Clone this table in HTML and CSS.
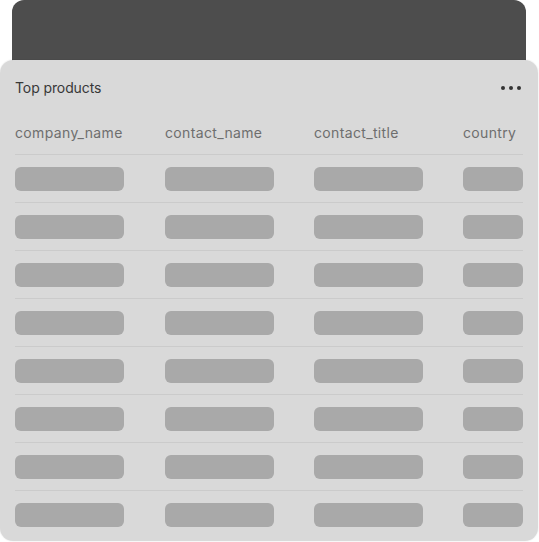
FILE: index.html
```html
<!DOCTYPE html>
<html>
<head>
<meta charset="utf-8">
<link rel="stylesheet" href="styles.css">
</head>
<body>
<div class="stack">
  <div class="back-card"></div>
  <div class="card">
    <div class="card-head">
      <span class="title">Top products</span>
      <span class="more"><i></i><i></i><i></i></span>
    </div>
    <div class="table">
      <div class="row head">
        <div class="cell">company_name</div>
        <div class="cell">contact_name</div>
        <div class="cell">contact_title</div>
        <div class="cell">country</div>
      </div>
      <div class="row"><div class="cell"><span class="bar"></span></div><div class="cell"><span class="bar"></span></div><div class="cell"><span class="bar"></span></div><div class="cell"><span class="bar last"></span></div></div>
      <div class="row"><div class="cell"><span class="bar"></span></div><div class="cell"><span class="bar"></span></div><div class="cell"><span class="bar"></span></div><div class="cell"><span class="bar last"></span></div></div>
      <div class="row"><div class="cell"><span class="bar"></span></div><div class="cell"><span class="bar"></span></div><div class="cell"><span class="bar"></span></div><div class="cell"><span class="bar last"></span></div></div>
      <div class="row"><div class="cell"><span class="bar"></span></div><div class="cell"><span class="bar"></span></div><div class="cell"><span class="bar"></span></div><div class="cell"><span class="bar last"></span></div></div>
      <div class="row"><div class="cell"><span class="bar"></span></div><div class="cell"><span class="bar"></span></div><div class="cell"><span class="bar"></span></div><div class="cell"><span class="bar last"></span></div></div>
      <div class="row"><div class="cell"><span class="bar"></span></div><div class="cell"><span class="bar"></span></div><div class="cell"><span class="bar"></span></div><div class="cell"><span class="bar last"></span></div></div>
      <div class="row"><div class="cell"><span class="bar"></span></div><div class="cell"><span class="bar"></span></div><div class="cell"><span class="bar"></span></div><div class="cell"><span class="bar last"></span></div></div>
      <div class="row end"><div class="cell"><span class="bar"></span></div><div class="cell"><span class="bar"></span></div><div class="cell"><span class="bar"></span></div><div class="cell"><span class="bar last"></span></div></div>
    </div>
  </div>
</div>
</body>
</html>
```

FILE: styles.css
```css
html, body {
  margin: 0;
  padding: 0;
  background: #ffffff;
}
body {
  font-family: Inter, "Liberation Sans", sans-serif;
  width: 539px;
  height: 542px;
  overflow: hidden;
}
.stack {
  display: flex;
  flex-direction: column;
}
.back-card {
  margin: 0 13px 0 12px;
  height: 74px;
  background: #4d4d4d;
  border-radius: 12px 12px 0 0;
}
.card {
  margin-top: -14px;
  margin-right: 1px;
  height: 481px;
  background: #d9d9d9;
  border-radius: 13px;
  box-shadow: 0 0 0 1px rgba(0,0,0,0.03);
  padding: 0 15px;
  box-sizing: border-box;
  overflow: hidden;
}
.card-head {
  display: flex;
  justify-content: space-between;
  align-items: center;
  height: 20px;
  padding-top: 17px;
}
.title {
  font-size: 14px;
  color: #383838;
  letter-spacing: -0.1px;
}
.more {
  display: flex;
  gap: 4px;
  margin-right: 2px;
  margin-top: 1px;
}
.more i {
  width: 4px;
  height: 4px;
  border-radius: 50%;
  background: #333333;
}
.table {
  margin-top: 15px;
}
.row {
  display: grid;
  grid-template-columns: 150px 149px 149px 60px;
  align-items: center;
  height: 47px;
  border-bottom: 1px solid #cbcbcb;
}
.row.head {
  height: 42px;
}
.row.end {
  border-bottom: none;
}
.cell {
  font-size: 14px;
  color: #6e6e6e;
  white-space: nowrap;
  display: flex;
  align-items: center;
}
.row.head .cell {
  padding-bottom: 1px;
  letter-spacing: 0.35px;
}
.bar {
  display: block;
  width: 109px;
  height: 24px;
  border-radius: 6px;
  background: #a9a9a9;
  margin-top: 1px;
}
.bar.last {
  width: 60px;
}
```
